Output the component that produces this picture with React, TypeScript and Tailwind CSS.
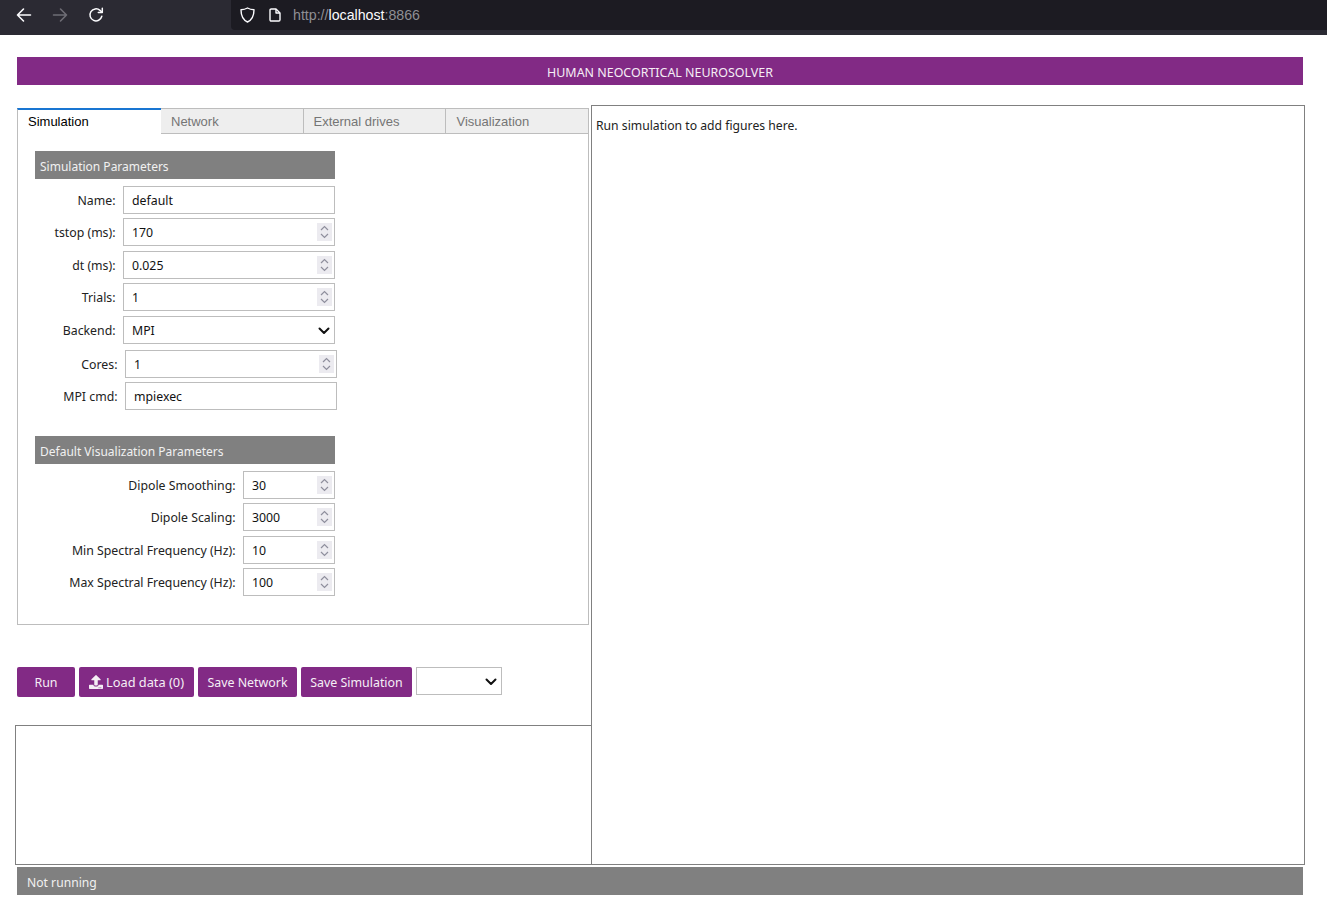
import { FaUpload } from "react-icons/fa";

function Chevron() {
  return (
    <svg width="12" height="8" viewBox="0 0 12 8" fill="none" stroke="#111" strokeWidth="2" strokeLinecap="round" strokeLinejoin="round">
      <path d="M1.5 1.5 6 6l4.500-4.500" />
    </svg>
  );
}

function Spinner() {
  return (
    <div className="absolute right-[2px] top-[4px] flex h-[18px] w-[15px] items-center justify-center bg-[#ecebf0]">
      <svg width="9" height="14" viewBox="0 0 9 14" fill="none" stroke="#8f8f9d" strokeWidth="1.2">
        <path d="M1 5 4.500 1.500 8 5" />
        <path d="M1 9l3.500 3.500L8 9" />
      </svg>
    </div>
  );
}

function Field({ value, spin, select, className }: { value: string; spin?: boolean; select?: boolean; className: string }) {
  return (
    <div className={"relative flex h-[28px] items-center border border-[#bdbdbd] bg-white pl-[8px] pt-[3px] text-[12.3px] text-[#111] " + className}>
      <span>{value}</span>
      {spin && <Spinner />}
      {select && (
        <div className="absolute right-[4px] top-[10px] flex">
          <Chevron />
        </div>
      )}
    </div>
  );
}

function Row({ label, labelW, children, className }: { label: string; labelW: string; children: React.ReactNode; className: string }) {
  return (
    <div className={"flex items-center " + className}>
      <div className={"pr-[7.5px] pt-[3px] text-right text-[12.3px] text-[#222] " + labelW}>{label}</div>
      {children}
    </div>
  );
}

function SectionTitle({ children, className }: { children: React.ReactNode; className: string }) {
  return <div className={"flex h-[28px] items-center bg-[#808080] pl-[5px] pt-[4px] text-[12px] text-[#f1f1f1] " + className}>{children}</div>;
}

function Btn({ children, className }: { children: React.ReactNode; className: string }) {
  return (
    <div className={"flex h-[30px] items-center justify-center rounded-[2px] bg-[#822a85] pt-[3px] text-[12.4px] text-[#f5eef5] " + className}>
      {children}
    </div>
  );
}

export default function App() {
  return (
    <div className="flex h-[908px] w-[1327px] flex-col overflow-hidden bg-white font-['Noto_Sans',sans-serif] text-[13px]">
      {/* browser chrome */}
      <div className="flex h-[35px] shrink-0 items-start bg-[#2b2a33]">
        <div className="flex h-[30px] w-[231px] shrink-0 items-center">
          <svg className="ml-[16px]" width="16" height="16" viewBox="0 0 16 16" fill="none" stroke="#fbfbfe" strokeWidth="1.6" strokeLinecap="round" strokeLinejoin="round">
            <path d="M1.500 8h13M7.500 2 1.500 8l6 6" />
          </svg>
          <svg className="ml-[20px]" width="16" height="16" viewBox="0 0 16 16" fill="none" stroke="#6e6d75" strokeWidth="1.6" strokeLinecap="round" strokeLinejoin="round">
            <path d="M14.500 8h-13M8.500 2l6 6-6 6" />
          </svg>
          <svg className="ml-[20px]" width="16" height="16" viewBox="0 0 16 16" fill="none" stroke="#fbfbfe" strokeWidth="1.500" strokeLinecap="round" strokeLinejoin="round">
            <path d="M13.800 9.300A6 6 0 1 1 12 3.400L14 5.200" />
            <path d="M14.300 1.300v4.200h-4" />
          </svg>
        </div>
        <div className="flex h-[30px] grow items-center rounded-bl-[4px] bg-[#1c1b22] pl-[9px] font-['Liberation_Sans',sans-serif] text-[14.2px]">
          <svg width="15" height="16" viewBox="0 0 15 16" fill="none" stroke="#fbfbfe" strokeWidth="1.400" strokeLinejoin="round">
            <path d="M7.500 1C5.500 2.200 3.400 2.700 1 2.800c0 5.500 1.700 10 6.500 12.200C12.300 12.800 14 8.300 14 2.800 11.600 2.700 9.500 2.200 7.500 1Z" />
          </svg>
          <svg className="ml-[14px]" width="12" height="14" viewBox="0 0 12 14" fill="none" stroke="#fbfbfe" strokeWidth="1.400" strokeLinejoin="round">
            <path d="M1 2.200C1 1.500 1.500 1 2.200 1H7l4 4v6.800c0 .7-.5 1.200-1.200 1.200H2.200C1.500 13 1 12.500 1 11.800Z" />
            <path d="M7 1v4h4" />
          </svg>
          <span className="ml-[12px] pt-[2px] text-[#8f8f94]">
            http://<span className="text-[#fbfbfe]">localhost</span>:8866
          </span>
        </div>
      </div>

      {/* page */}
      <div className="flex grow flex-col px-[15px]">
        <div className="mx-[2px] mt-[22px] flex h-[28px] w-[1286px] shrink-0 items-center justify-center bg-[#822a85] pt-[5px] text-[12.45px] text-[#f5eef5]">
          HUMAN NEOCORTICAL NEUROSOLVER
        </div>

        <div className="mt-[20px] flex h-[760px] shrink-0">
          {/* left */}
          <div className="flex w-[576px] shrink-0 flex-col">
            <div className="ml-[2px] mt-[3px] flex h-[517px] w-[572px] shrink-0 flex-col border border-t-0 border-[#bdbdbd]">
              <div className="-ml-px -mr-px flex h-[26px] shrink-0 font-['Liberation_Sans',sans-serif] text-[13px] text-[#757575]">
                <div className="z-10 flex w-[144px] items-center border-t-2 border-l border-[#1976d2] border-l-[#bdbdbd] bg-white pl-[10px] text-black">Simulation</div>
                <div className="-ml-px flex w-[144px] items-center border border-[#bdbdbd] bg-[#eeeeee] pl-[10px] pt-[2px]">Network</div>
                <div className="-ml-px flex w-[143px] items-center border border-[#bdbdbd] bg-[#eeeeee] pl-[9.5px] pt-[2px]">External drives</div>
                <div className="-ml-px flex grow items-center border border-[#bdbdbd] bg-[#eeeeee] pl-[10.5px] pt-[2px]">Visualization</div>
              </div>

              <div className="flex flex-col pl-[17px]">
                <SectionTitle className="mt-[17px] w-[300px]">Simulation Parameters</SectionTitle>
                <Row label="Name:" labelW="w-[88px]" className="mt-[7px]"><Field value="default" className="w-[212px]" /></Row>
                <Row label="tstop (ms):" labelW="w-[88px]" className="mt-[4px]"><Field value="170" spin className="w-[212px]" /></Row>
                <Row label="dt (ms):" labelW="w-[88px]" className="mt-[5px]"><Field value="0.025" spin className="w-[212px]" /></Row>
                <Row label="Trials:" labelW="w-[88px]" className="mt-[4px]"><Field value="1" spin className="w-[212px]" /></Row>
                <Row label="Backend:" labelW="w-[88px]" className="mt-[5px]"><Field value="MPI" select className="w-[212px]" /></Row>
                <Row label="Cores:" labelW="w-[90px]" className="mt-[6px]"><Field value="1" spin className="w-[212px]" /></Row>
                <Row label="MPI cmd:" labelW="w-[90px]" className="mt-[4px]"><Field value="mpiexec" className="w-[212px]" /></Row>

                <SectionTitle className="mt-[26px] w-[300px]">Default Visualization Parameters</SectionTitle>
                <Row label="Dipole Smoothing:" labelW="w-[208px]" className="mt-[7px]"><Field value="30" spin className="w-[92px]" /></Row>
                <Row label="Dipole Scaling:" labelW="w-[208px]" className="mt-[4px]"><Field value="3000" spin className="w-[92px]" /></Row>
                <Row label="Min Spectral Frequency (Hz):" labelW="w-[208px]" className="mt-[5px]"><Field value="10" spin className="w-[92px]" /></Row>
                <Row label="Max Spectral Frequency (Hz):" labelW="w-[208px]" className="mt-[4px]"><Field value="100" spin className="w-[92px]" /></Row>
              </div>
            </div>

            <div className="ml-[2px] mt-[42px] flex items-start gap-[4px]">
              <Btn className="w-[58px]">Run</Btn>
              <Btn className="w-[115px] gap-[3px]"><FaUpload className="-mt-[3px] h-[14px] w-[14px]" /><span className="-mt-[2px] text-[12.8px]">Load data (0)</span></Btn>
              <Btn className="w-[99px]">Save Network</Btn>
              <Btn className="w-[111px]">Save Simulation</Btn>
              <div className="relative h-[28px] w-[86px] border border-[#bdbdbd] bg-white">
                <div className="absolute right-[4px] top-[10px] flex"><Chevron /></div>
              </div>
            </div>

            <div className="mt-[28px] h-[140px] w-[576px] shrink-0 border border-r-0 border-[#808080]" />
          </div>

          {/* right */}
          <div className="h-[760px] w-[714px] shrink-0 border border-[#808080] pl-[4px] pt-[11px] text-[12.2px] text-[#222]">
            Run simulation to add figures here.
          </div>
        </div>

        <div className="mx-[2px] mt-[2px] flex h-[28px] w-[1286px] shrink-0 items-center bg-[#808080] pl-[10px] pt-[5px] text-[12.15px] text-[#f1f1f1]">
          Not running
        </div>
      </div>
    </div>
  );
}
